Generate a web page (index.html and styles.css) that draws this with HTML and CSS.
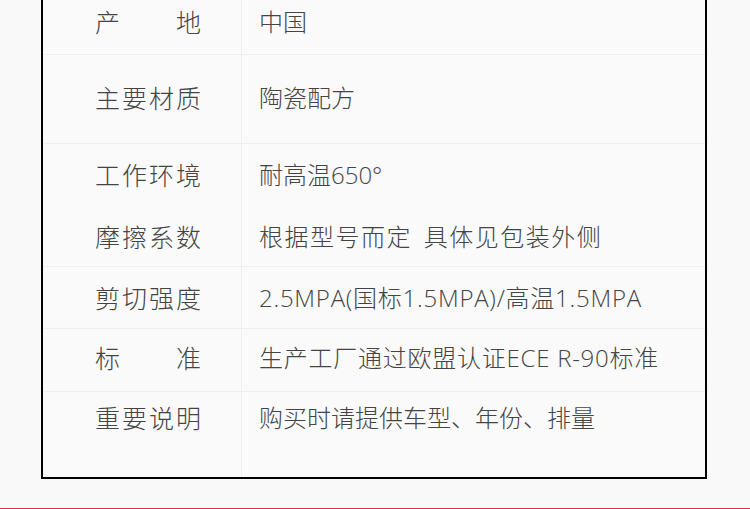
FILE: index.html
```html
<!DOCTYPE html>
<html lang="zh-CN">
<head>
    <meta charset="UTF-8">
    <meta name="viewport" content="width=device-width, initial-scale=1.0">
    <title>产品参数</title>
    <link rel="stylesheet" href="styles.css">
</head>
<body>
    <div class="sheet">
        <div class="row row-origin">
            <div class="label"><span>产地</span></div>
            <div class="value">中国</div>
        </div>
        <div class="row row-material">
            <div class="label"><span>主要材质</span></div>
            <div class="value">陶瓷配方</div>
        </div>
        <div class="row row-double">
            <div class="label">
                <span>工作环境</span>
                <span>摩擦系数</span>
            </div>
            <div class="value">
                <span>耐高温650°</span>
                <span class="spaced">根据型号而定 具体见包装外侧</span>
            </div>
        </div>
        <div class="row row-shear">
            <div class="label"><span>剪切强度</span></div>
            <div class="value latin">2.5MPA(国标1.5MPA)/高温1.5MPA</div>
        </div>
        <div class="row row-standard">
            <div class="label"><span>标准</span></div>
            <div class="value latin">生产工厂通过欧盟认证ECE R-90标准</div>
        </div>
        <div class="row row-note">
            <div class="label"><span>重要说明</span></div>
            <div class="value">购买时请提供车型、年份、排量</div>
        </div>
    </div>
    <div class="footer-line"></div>
</body>
</html>
```

FILE: styles.css
```css
* {
    box-sizing: border-box;
    margin: 0;
    padding: 0;
    font-family: 'Open Sans', 'Noto Sans CJK SC', sans-serif;
}
body {
    background: #f9f9f9;
    color: #444;
    height: 509px;
    overflow: hidden;
}
.sheet {
    margin: 0 43px 0 41px;
    border: 2px solid #000;
    border-top: none;
    background: #fafafa;
}
.row {
    display: grid;
    grid-template-columns: 199px 1fr;
    border-bottom: 1px solid #efefef;
}
.row:last-child {
    border-bottom: none;
}
.label {
    border-right: 1px solid #efefef;
    padding-left: 52px;
    display: flex;
    flex-direction: column;
}
.label span {
    display: block;
    width: 106px;
    font-size: 25px;
    font-weight: 300;
    line-height: 30px;
    text-align: justify;
    text-align-last: justify;
}
.value {
    padding-left: 17px;
    font-size: 24px;
    font-weight: 300;
    line-height: 30px;
    display: flex;
    flex-direction: column;
}
.value.latin {
    letter-spacing: 0.75px;
}
.spaced {
    letter-spacing: 1.5px;
    word-spacing: 4px;
}
.row-origin {
    height: 55px;
}
.row-origin .label,
.row-origin .value {
    padding-top: 7px;
}
.row-material {
    height: 89px;
}
.row-material .label,
.row-material .value {
    padding-top: 28px;
}
.row-double {
    height: 123px;
}
.row-double .label,
.row-double .value {
    padding-top: 16px;
    gap: 32px;
}
.row-shear {
    height: 62px;
}
.row-shear .label,
.row-shear .value {
    padding-top: 16px;
}
.row-standard {
    height: 63px;
}
.row-standard .label,
.row-standard .value {
    padding-top: 14px;
}
.row-note {
    height: 85px;
}
.row-note .label,
.row-note .value {
    padding-top: 11px;
}
.footer-line {
    margin-top: 29px;
    height: 2px;
    background: #e8323e;
}
```
